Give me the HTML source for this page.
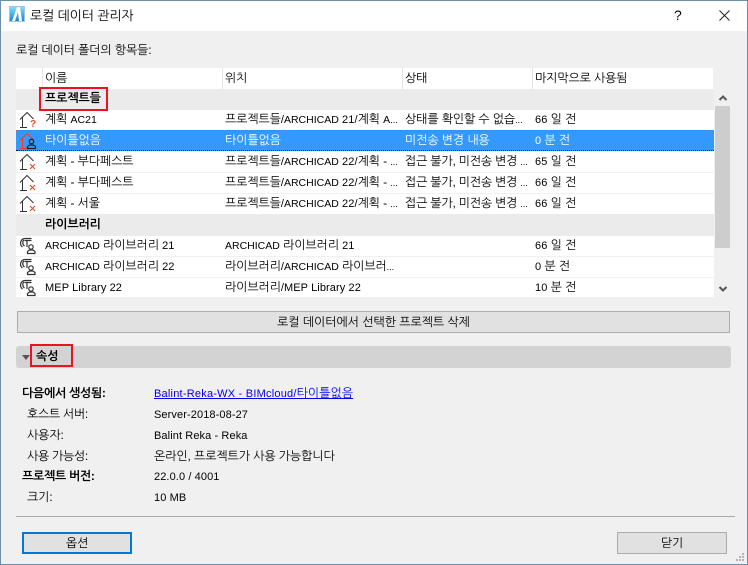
<!DOCTYPE html>
<html lang="ko"><head><meta charset="utf-8">
<style>
html,body{margin:0;padding:0;width:748px;height:565px;overflow:hidden;background:#f0f0f0}
body{position:relative;font:12px "Liberation Sans","NanumGothic","Noto Sans CJK KR",sans-serif;color:#000;letter-spacing:-.12px}
.a,.t{position:absolute}
.t{white-space:nowrap;line-height:16px;height:16px}
.b{font-weight:bold}
.w{color:#fff}
i{font-style:normal;font-size:11px;letter-spacing:.1px}
i.c{font-size:10.5px;letter-spacing:0}
i.e{font-size:9px;letter-spacing:0}
svg{position:absolute;overflow:visible}
</style></head><body>
<div class="a" style="left:0;top:0;width:748px;height:31px;background:#fff"></div>
<svg style="left:9px;top:6px" width="16" height="16" viewBox="0 0 16 16"><defs><linearGradient id="g" x1="0" y1="0" x2="0" y2="1"><stop offset="0" stop-color="#7fe3f5"/><stop offset="1" stop-color="#1d7fd0"/></linearGradient></defs><rect x=".5" y=".5" width="15" height="15" fill="url(#g)" stroke="#9fc8e0"/><path d="M3 15Q6 7 8 1h3l2 14h-3L9 6 6 15z" fill="#fff"/></svg>
<div class="t" style="left:30px;top:8px;font-size:13px;letter-spacing:-.15px">로컬 데이터 관리자</div>
<div class="t" style="left:674px;top:7px;font-size:14px">?</div>
<svg style="left:719px;top:10px" width="11" height="11"><path d="M.5.5l10 10M10.500.5l-10 10" stroke="#222" fill="none"/></svg>

<div class="t" style="left:16px;top:42px;letter-spacing:-.13px">로컬 데이터 폴더의 항목들:</div>

<div class="a" style="left:16px;top:68px;width:697px;height:21px;background:#fff"></div>
<div class="a" style="left:42px;top:68px;width:1px;height:21px;background:#e4e4e4"></div>
<div class="a" style="left:222px;top:68px;width:1px;height:21px;background:#e4e4e4"></div>
<div class="a" style="left:402px;top:68px;width:1px;height:21px;background:#e4e4e4"></div>
<div class="a" style="left:532px;top:68px;width:1px;height:21px;background:#e4e4e4"></div>
<div class="t" style="left:45px;top:70px">이름</div>
<div class="t" style="left:225px;top:70px">위치</div>
<div class="t" style="left:405px;top:70px">상태</div>
<div class="t" style="left:535px;top:70px;letter-spacing:-.13px">마지막으로 사용됨</div>

<div class="a" style="left:16px;top:89px;width:698px;height:21px;background:#ebebeb"></div>
<div class="a" style="left:16px;top:110px;width:698px;height:20px;background:#fff"></div>
<div class="a" style="left:16px;top:130px;width:698px;height:21px;box-sizing:border-box;background:#3399ff;border-top:1px dotted #b86a2a;border-bottom:1px dotted #111"></div>
<div class="a" style="left:16px;top:152px;width:698px;height:20px;background:#fff"></div>
<div class="a" style="left:16px;top:173px;width:698px;height:20px;background:#fff"></div>
<div class="a" style="left:16px;top:194px;width:698px;height:20px;background:#fff"></div>
<div class="a" style="left:16px;top:214px;width:698px;height:22px;background:#ebebeb"></div>
<div class="a" style="left:16px;top:236px;width:698px;height:20px;background:#fff"></div>
<div class="a" style="left:16px;top:257px;width:698px;height:20px;background:#fff"></div>
<div class="a" style="left:16px;top:278px;width:698px;height:19px;background:#fff"></div>

<div class="a" style="left:39px;top:87px;width:69px;height:24px;box-sizing:border-box;border:2px solid #ee1122"></div>
<div class="t b" style="left:45px;top:90px">프로젝트들</div>
<div class="t b" style="left:45px;top:216px">라이브러리</div>

<div class="t" style="left:45px;top:111px">계획 <i class="c">AC21</i></div>
<div class="t w" style="left:45px;top:132px">타이틀없음</div>
<div class="t" style="left:45px;top:153px">계획 - 부다페스트</div>
<div class="t" style="left:45px;top:174px">계획 - 부다페스트</div>
<div class="t" style="left:45px;top:195px">계획 - 서울</div>
<div class="t" style="left:45px;top:237px"><i class="c">ARCHICAD</i> 라이브러리 <i>21</i></div>
<div class="t" style="left:45px;top:258px"><i class="c">ARCHICAD</i> 라이브러리 <i>22</i></div>
<div class="t" style="left:45px;top:279px"><i>MEP Library 22</i></div>

<div class="t" style="left:225px;top:111px">프로젝트들<i>/</i><i class="c">ARCHICAD</i> <i>21/</i>계획 <i class="c">A</i><i class="e">...</i></div>
<div class="t w" style="left:225px;top:132px">타이틀없음</div>
<div class="t" style="left:225px;top:153px">프로젝트들<i>/</i><i class="c">ARCHICAD</i> <i>22/</i>계획 - <i class="e">...</i></div>
<div class="t" style="left:225px;top:174px">프로젝트들<i>/</i><i class="c">ARCHICAD</i> <i>22/</i>계획 - <i class="e">...</i></div>
<div class="t" style="left:225px;top:195px">프로젝트들<i>/</i><i class="c">ARCHICAD</i> <i>22/</i>계획 - <i class="e">...</i></div>
<div class="t" style="left:225px;top:237px"><i class="c">ARCHICAD</i> 라이브러리 <i>21</i></div>
<div class="t" style="left:225px;top:258px">라이브러리<i>/</i><i class="c">ARCHICAD</i> 라이브러<i class="e">...</i></div>
<div class="t" style="left:225px;top:279px">라이브러리<i>/MEP Library 22</i></div>

<div class="t" style="left:405px;top:111px">상태를 확인할 수 없습<i class="e">...</i></div>
<div class="t w" style="left:405px;top:132px">미전송 변경 내용</div>
<div class="t" style="left:405px;top:153px;letter-spacing:-.2px">접근 불가, 미전송 변경 <i class="e">...</i></div>
<div class="t" style="left:405px;top:174px;letter-spacing:-.2px">접근 불가, 미전송 변경 <i class="e">...</i></div>
<div class="t" style="left:405px;top:195px;letter-spacing:-.2px">접근 불가, 미전송 변경 <i class="e">...</i></div>

<div class="t" style="left:535px;top:111px"><i>66</i> 일 전</div>
<div class="t w" style="left:535px;top:132px"><i>0</i> 분 전</div>
<div class="t" style="left:535px;top:153px"><i>65</i> 일 전</div>
<div class="t" style="left:535px;top:174px"><i>66</i> 일 전</div>
<div class="t" style="left:535px;top:195px"><i>66</i> 일 전</div>
<div class="t" style="left:535px;top:237px"><i>66</i> 일 전</div>
<div class="t" style="left:535px;top:258px"><i>0</i> 분 전</div>
<div class="t" style="left:535px;top:279px"><i>10</i> 분 전</div>

<svg style="left:19px;top:111px" width="18" height="18"><path d="M1 8.500 8 1.500l6.500 6.500M3.500 6v10.500M1 16.500h7" fill="none" stroke="#333"/><text x="11" y="16" font-size="10" font-weight="bold" fill="#f0502a" font-family="Liberation Sans">?</text></svg>
<svg style="left:19px;top:132px" width="18" height="18"><path d="M1 8.500 8 1.500l6.500 6.500M3.500 6v10.500M1 16.500h7" fill="none" stroke="#e8401c"/><circle cx="12.500" cy="9.500" r="2.200" fill="none" stroke="#222" stroke-width="1.300"/><path d="M8.500 16.500v-2l2-1.500h4l2 1.500v2z" fill="none" stroke="#222" stroke-width="1.300"/></svg>
<svg style="left:19px;top:153px" width="18" height="18"><path d="M1 8.500 8 1.500l6.500 6.500M3.500 6v10.500M1 16.500h7" fill="none" stroke="#333"/><path d="M11 11l5 5M16 11l-5 5" stroke="#e8401c" fill="none"/></svg>
<svg style="left:19px;top:174px" width="18" height="18"><path d="M1 8.500 8 1.500l6.500 6.500M3.500 6v10.500M1 16.500h7" fill="none" stroke="#333"/><path d="M11 11l5 5M16 11l-5 5" stroke="#e8401c" fill="none"/></svg>
<svg style="left:19px;top:195px" width="18" height="18"><path d="M1 8.500 8 1.500l6.500 6.500M3.500 6v10.500M1 16.500h7" fill="none" stroke="#333"/><path d="M11 11l5 5M16 11l-5 5" stroke="#e8401c" fill="none"/></svg>
<svg style="left:19px;top:237px" width="18" height="18"><path d="M3.500 10C0 7.500 1.500 1.500 6 1.500h6.500M5 3C3 4.500 3.500 7.500 5.500 9M5.500 3.500h7M8 3.500V10" fill="none" stroke="#333" stroke-width="1.200"/><circle cx="12" cy="10" r="2.200" fill="#fff" stroke="#333" stroke-width="1.200"/><path d="M8.500 16.500v-2l2-1.500h3.500l2 1.500v2z" fill="none" stroke="#333" stroke-width="1.200"/></svg>
<svg style="left:19px;top:258px" width="18" height="18"><path d="M3.500 10C0 7.500 1.500 1.500 6 1.500h6.500M5 3C3 4.500 3.500 7.500 5.500 9M5.500 3.500h7M8 3.500V10" fill="none" stroke="#333" stroke-width="1.200"/><circle cx="12" cy="10" r="2.200" fill="#fff" stroke="#333" stroke-width="1.200"/><path d="M8.500 16.500v-2l2-1.500h3.500l2 1.500v2z" fill="none" stroke="#333" stroke-width="1.200"/></svg>
<svg style="left:19px;top:279px" width="18" height="18"><path d="M3.500 10C0 7.500 1.500 1.500 6 1.500h6.500M5 3C3 4.500 3.500 7.500 5.500 9M5.500 3.500h7M8 3.500V10" fill="none" stroke="#333" stroke-width="1.200"/><circle cx="12" cy="10" r="2.200" fill="#fff" stroke="#333" stroke-width="1.200"/><path d="M8.500 16.500v-2l2-1.500h3.500l2 1.500v2z" fill="none" stroke="#333" stroke-width="1.200"/></svg>

<div class="a" style="left:715px;top:106px;width:15px;height:142px;background:#cdcdcd"></div>
<svg style="left:719px;top:95px" width="8" height="6"><path d="M.5 5 4 1.500 7.500 5" fill="none" stroke="#555" stroke-width="2"/></svg>
<svg style="left:719px;top:286px" width="8" height="6"><path d="M.5 1 4 4.500 7.500 1" fill="none" stroke="#555" stroke-width="2"/></svg>

<div class="a" style="left:17px;top:311px;width:713px;height:22px;box-sizing:border-box;background:#e1e1e1;border:1px solid #adadad"></div>
<div class="t" style="left:17px;top:314px;width:713px;text-align:center;letter-spacing:-.05px">로컬 데이터에서 선택한 프로젝트 삭제</div>

<div class="a" style="left:16px;top:346px;width:715px;height:22px;background:#d3d3d3;border-radius:3px"></div>
<svg style="left:22px;top:355px" width="8" height="5"><path d="M0 0h8L4 5z" fill="#555"/></svg>
<div class="a" style="left:30px;top:344px;width:43px;height:23px;box-sizing:border-box;border:2px solid #ee1122"></div>
<div class="t b" style="left:36px;top:348px">속성</div>

<div class="t b" style="left:22px;top:385px;letter-spacing:-.3px">다음에서 생성됨:</div>
<div class="t" style="left:27px;top:406px;letter-spacing:-.3px">호스트 서버:</div>
<div class="t" style="left:27px;top:427px">사용자:</div>
<div class="t" style="left:27px;top:448px;letter-spacing:-.3px">사용 가능성:</div>
<div class="t b" style="left:22px;top:468px;letter-spacing:-.3px">프로젝트 버전:</div>
<div class="t" style="left:27px;top:489px">크기:</div>

<div class="t" style="left:154px;top:385px;color:#0000ee;text-decoration:underline;letter-spacing:0"><i style="letter-spacing:.22px">Balint-Reka-WX - BIMcloud/</i>타이틀없음</div>
<div class="t" style="left:154px;top:406px"><i>Server-2018-08-27</i></div>
<div class="t" style="left:154px;top:427px"><i>Balint Reka - Reka</i></div>
<div class="t" style="left:154px;top:448px;letter-spacing:-.1px">온라인, 프로젝트가 사용 가능합니다</div>
<div class="t" style="left:154px;top:468px"><i>22.0.0 / 4001</i></div>
<div class="t" style="left:154px;top:489px"><i>10 MB</i></div>

<div class="a" style="left:16px;top:516px;width:719px;height:1px;background:#a8a8a8"></div>
<div class="a" style="left:22px;top:532px;width:110px;height:22px;box-sizing:border-box;background:#e1e1e1;border:2px solid #0078d7"></div>
<div class="t" style="left:22px;top:535px;width:110px;text-align:center">옵션</div>
<div class="a" style="left:617px;top:532px;width:110px;height:22px;box-sizing:border-box;background:#e1e1e1;border:1px solid #adadad"></div>
<div class="t" style="left:617px;top:535px;width:110px;text-align:center">닫기</div>
<svg style="left:736px;top:553px" width="10" height="10"><path d="M6 0h2v2H6zM3 3h2v2H3zM6 3h2v2H6zM0 6h2v2H0zM3 6h2v2H3zM6 6h2v2H6z" fill="#b5b5b5"/></svg>

<div class="a" style="left:0;top:0;width:748px;height:565px;box-sizing:border-box;border:1px solid #6d8fae"></div>
</body></html>
